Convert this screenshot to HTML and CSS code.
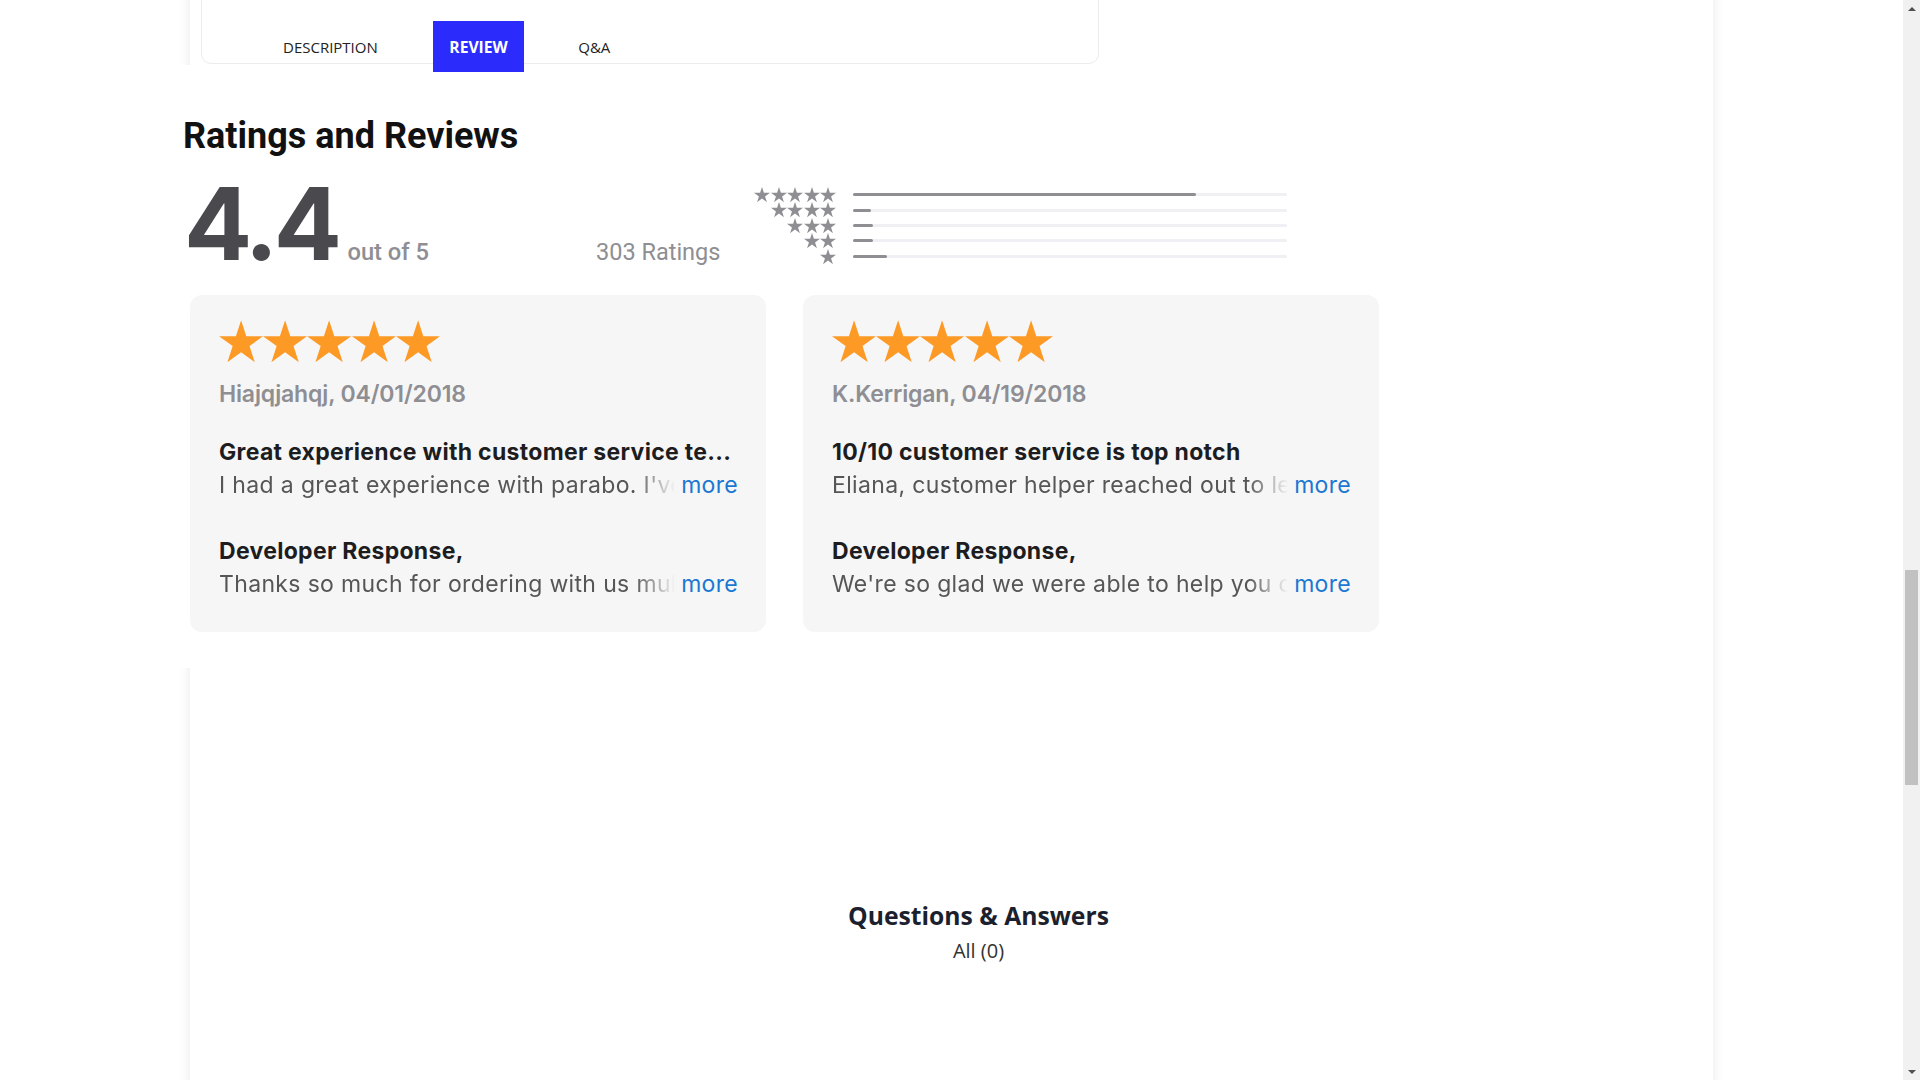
FILE: index.html
```html
<!DOCTYPE html>
<html lang="en">
<head>
<meta charset="utf-8">
<title>Ratings and Reviews</title>
<link rel="stylesheet" href="styles.css">
</head>
<body>
<svg class="defs" width="0" height="0" aria-hidden="true">
  <symbol id="star" viewBox="0 0 100 95.1">
    <path d="M50 0 L61.8 36.33 L100 36.32 L69.1 58.77 L80.9 95.1 L50 72.65 L19.1 95.1 L30.9 58.77 L0 36.32 L38.2 36.33 Z"/>
  </symbol>
</svg>
<div class="screen">
  <main class="main">
    <div class="panel">
      <div class="tabs-area">
        <div class="tab-card">
          <nav class="tabs">
            <span class="tab">DESCRIPTION</span>
            <span class="tab tab-active">REVIEW</span>
            <span class="tab">Q&amp;A</span>
          </nav>
        </div>
      </div>

      <section class="ratings">
        <h2 class="ratings-title">Ratings and Reviews</h2>
        <div class="summary">
          <div class="score">
            <span class="score-num">4.4</span>
            <span class="score-out">out of 5</span>
          </div>
          <span class="count">303 Ratings</span>
          <div class="histogram">
            <div class="hist-stars"><svg><use href="#star"/></svg><svg><use href="#star"/></svg><svg><use href="#star"/></svg><svg><use href="#star"/></svg><svg><use href="#star"/></svg></div>
            <div class="bar"><span class="fill" style="width:79%"></span></div>
            <div class="hist-stars"><svg><use href="#star"/></svg><svg><use href="#star"/></svg><svg><use href="#star"/></svg><svg><use href="#star"/></svg></div>
            <div class="bar"><span class="fill" style="width:4%"></span></div>
            <div class="hist-stars"><svg><use href="#star"/></svg><svg><use href="#star"/></svg><svg><use href="#star"/></svg></div>
            <div class="bar"><span class="fill" style="width:4.6%"></span></div>
            <div class="hist-stars"><svg><use href="#star"/></svg><svg><use href="#star"/></svg></div>
            <div class="bar"><span class="fill" style="width:4.6%"></span></div>
            <div class="hist-stars"><svg><use href="#star"/></svg></div>
            <div class="bar"><span class="fill" style="width:7.8%"></span></div>
          </div>
        </div>

        <div class="reviews">
          <article class="review">
            <div class="review-stars"><svg><use href="#star"/></svg><svg><use href="#star"/></svg><svg><use href="#star"/></svg><svg><use href="#star"/></svg><svg><use href="#star"/></svg></div>
            <p class="review-meta">Hiajqjahqj, 04/01/2018</p>
            <h3 class="review-title">Great experience with customer service te...</h3>
            <div class="line"><span class="line-text">I had a great experience with parabo. I've been ordering for months</span><span class="more">more</span></div>
            <h3 class="dev-title">Developer Response,</h3>
            <div class="line"><span class="line-text">Thanks so much for ordering with us multiple times</span><span class="more">more</span></div>
          </article>
          <article class="review">
            <div class="review-stars"><svg><use href="#star"/></svg><svg><use href="#star"/></svg><svg><use href="#star"/></svg><svg><use href="#star"/></svg><svg><use href="#star"/></svg></div>
            <p class="review-meta">K.Kerrigan, 04/19/2018</p>
            <h3 class="review-title">10/10 customer service is top notch</h3>
            <div class="line"><span class="line-text">Eliana, customer helper reached out to let me know</span><span class="more">more</span></div>
            <h3 class="dev-title">Developer Response,</h3>
            <div class="line"><span class="line-text">We're so glad we were able to help you out today</span><span class="more">more</span></div>
          </article>
        </div>
      </section>

      <section class="qa">
        <h2 class="qa-title">Questions &amp; Answers</h2>
        <p class="qa-count">All (0)</p>
      </section>
    </div>
  </main>
  <div class="scrollbar">
    <div class="sb-btn"><span class="arrow-up"></span></div>
    <div class="sb-track"><div class="sb-thumb"></div></div>
    <div class="sb-btn"><span class="arrow-down"></span></div>
  </div>
</div>
</body>
</html>
```
FILE: styles.css
```css
* { box-sizing: border-box; }
html, body { margin: 0; padding: 0; background: #fff; }
body { font-family: "Open Sans", "Liberation Sans", sans-serif; color: #222; }
.defs { position: absolute; width: 0; height: 0; overflow: hidden; }

.screen { display: flex; width: 1920px; height: 1080px; overflow: hidden; }
.main { flex: 1; min-width: 0; overflow: hidden; }
.scrollbar { width: 17px; background: #f1f1f1; display: flex; flex-direction: column; }

.panel {
  width: 1523px;
  margin: -20px auto 0;
  min-height: 1200px;
  background: #fff;
  box-shadow: 0 0 12px rgba(0, 0, 0, 0.09);
}

/* tabs */
.tabs-area { height: 85px; padding-left: 11px; }
.tab-card {
  width: 898px;
  height: 84px;
  border: 1px solid #ececec;
  border-radius: 10px;
  background: #fff;
}
.tabs { display: flex; padding: 40px 0 0 66px; }
.tab {
  height: 51px;
  display: flex;
  align-items: center;
  padding: 1px 15px 0;
  margin-right: 40.5px;
  font-size: 15px;
  color: #222;
  white-space: nowrap;
}
.tab-active {
  position: relative;
  z-index: 1;
  background: #2b2cfb;
  color: #fff;
  font-weight: 700;
  font-size: 15.7px;
  padding: 1px 16px 0;
  margin-right: 39.5px;
}

/* ratings */
.ratings {
  width: 1215px;
  margin-left: -10px;
  padding: 50px 0 36px;
  background: #fff;
  position: relative;
  font-family: Inter, "Noto Sans", sans-serif;
}
.ratings-title {
  margin: 0 0 0 3px;
  font-family: Roboto, "Noto Sans", sans-serif;
  font-size: 36px;
  line-height: 42px;
  font-weight: 700;
  color: #111;
}
.summary {
  display: flex;
  align-items: baseline;
  padding-left: 4px;
  margin-top: 14px;
  height: 104px;
}
.score { display: flex; align-items: baseline; }
.score-num {
  font-size: 101px;
  line-height: 104px;
  font-weight: 700;
  color: #4a4a4e;
  letter-spacing: -4.5px;
}
.score-out {
  margin-left: 10px;
  font-family: Roboto, sans-serif;
  font-size: 23.7px;
  font-weight: 500;
  color: #8e8e93;
}
.count {
  margin-left: 167px;
  font-family: Roboto, sans-serif;
  font-size: 23.5px;
  color: #8e8e93;
}
.histogram {
  align-self: flex-start;
  margin: 16px 0 0 33px;
  display: grid;
  grid-template-columns: 83px 434px;
  grid-auto-rows: 15.4px;
  column-gap: 17px;
  align-items: center;
}
.hist-stars { display: flex; justify-content: flex-end; gap: 0.6px; height: 15.4px; align-items: center; }
.hist-stars svg { width: 16px; height: 15.2px; fill: #8e8e93; }
.bar { height: 3px; background: #efeff4; border-radius: 2px; position: relative; }
.fill { display: block; height: 100%; background: #8e8e93; border-radius: 2px; }

.reviews { display: flex; gap: 37px; margin: 20px 0 0 10px; }
.review {
  width: 576px;
  background: #f6f6f6;
  border-radius: 12px;
  padding: 25px 28px 31px 29px;
}
.review-stars { display: flex; height: 42px; }
.review-stars svg { width: 44.2px; height: 42.3px; fill: #fd9a26; }
.review-meta {
  margin: 16px 0 0;
  font-size: 23px;
  line-height: 33px;
  font-weight: 600;
  letter-spacing: -0.15px;
  color: #8e8e93;
}
.review-title, .dev-title {
  margin: 25px 0 0;
  font-size: 23px;
  line-height: 33px;
  font-weight: 700;
  letter-spacing: 0.3px;
  color: #1d1d1f;
  white-space: nowrap;
}
.dev-title { margin-top: 33px; }
.line {
  display: flex;
  font-size: 23px;
  line-height: 33px;
  color: #565656;
}
.line-text {
  flex: 1;
  min-width: 0;
  overflow: hidden;
  white-space: nowrap;
  letter-spacing: 0.35px;
  -webkit-mask-image: linear-gradient(to right, #000 calc(100% - 42px), transparent calc(100% - 2px));
  mask-image: linear-gradient(to right, #000 calc(100% - 42px), transparent calc(100% - 2px));
}
.more { margin-left: 4px; color: #1a78d2; letter-spacing: 0.3px; }

/* Q&A */
.qa { padding: 232.5px 0 0 54px; text-align: center; }
.qa-title {
  margin: 0;
  font-size: 24.7px;
  line-height: 29px;
  font-weight: 700;
  color: #1c1f2e;
}
.qa-count {
  margin: 6px 0 0;
  font-size: 20px;
  line-height: 29px;
  color: #333;
}

/* fake scrollbar */
.sb-btn { height: 17px; display: flex; align-items: center; justify-content: center; }
.arrow-up, .arrow-down { width: 0; height: 0; border-left: 4px solid transparent; border-right: 4px solid transparent; }
.arrow-up { border-bottom: 4px solid #505050; }
.arrow-down { border-top: 4px solid #505050; }
.sb-track { flex: 1; }
.sb-thumb { margin: 553px 2px 0; height: 215px; background: #c1c1c1; }
```
